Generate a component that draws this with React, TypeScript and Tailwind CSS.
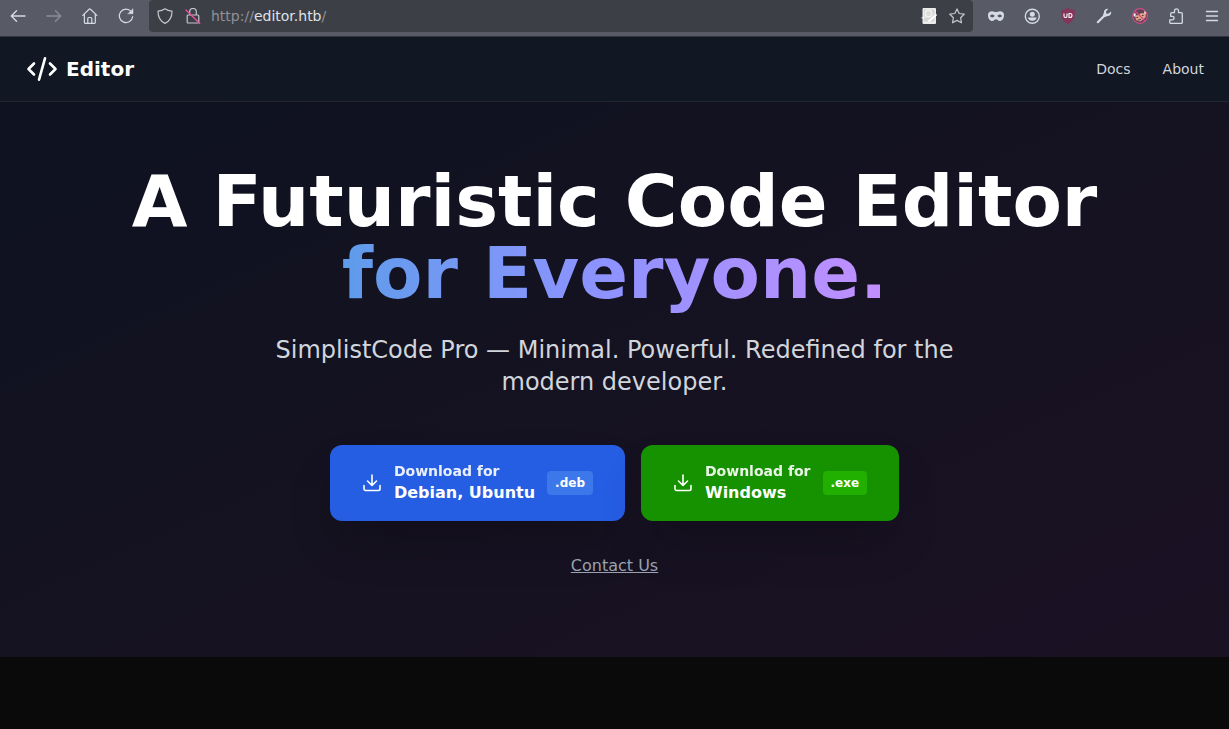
import React from "react";

const toolButton =
  "flex size-5 shrink-0 items-center justify-center text-[#d6dae6]";

type IconProps = { children: React.ReactNode; className?: string };

function Glyph({ children, className = "size-4" }: IconProps) {
  return (
    <svg
      viewBox="0 0 16 16"
      className={className}
      fill="none"
      stroke="currentColor"
      strokeWidth="1.2"
      strokeLinecap="round"
      strokeLinejoin="round"
      aria-hidden="true"
    >
      {children}
    </svg>
  );
}

function BrowserBar() {
  return (
    <div className="flex h-[37px] items-start border-b border-[#33343f] bg-[#585a65]">
      <div className="flex h-8 w-[149px] shrink-0 items-center gap-4 pl-2">
        <button type="button" aria-label="Back" className={toolButton}>
          <Glyph>
            <path d="M15 8H1.5M6.5 2.8L1.3 8l5.2 5.2" strokeWidth="1.4" />
          </Glyph>
        </button>
        <button
          type="button"
          aria-label="Forward"
          className="flex size-5 shrink-0 items-center justify-center text-[#8b8d97]"
        >
          <Glyph>
            <path d="M1 8h13.5M9.5 2.8L14.7 8l-5.2 5.2" strokeWidth="1.4" />
          </Glyph>
        </button>
        <button type="button" aria-label="Home" className={toolButton}>
          <Glyph>
            <path d="M.8 7.400L7.100 1.300a1 1 0 0 1 1.400 0L14.800 7.400M2.400 6.200v8a1.200 1.200 0 0 0 1.200 1.200h8.500a1.200 1.200 0 0 0 1.200-1.200v-8M5.800 15.200V10.500a1 1 0 0 1 1-1h2a1 1 0 0 1 1 1v4.700" />
          </Glyph>
        </button>
        <button type="button" aria-label="Reload" className={toolButton}>
          <Glyph>
            <path d="M13.300 3.700A6.700 6.700 0 1 0 14.700 8.500" />
            <path
              d="M15 1v4.800h-5z"
              fill="currentColor"
              strokeWidth="0.5"
            />
          </Glyph>
        </button>
      </div>

      <div className="flex h-8 min-w-0 flex-1 items-center rounded bg-[#3d3f46] px-2 text-[#c3c6d0]">
        <button
          type="button"
          aria-label="Tracking protection"
          className="flex size-4 shrink-0 items-center justify-center"
        >
          <Glyph>
            <path d="M8 .8c2 1.500 4.300 2.200 7 2.400 0 5.500-1.800 9.800-7 12.200C2.800 13 1 8.700 1 3.200 3.700 3 6 2.300 8 .8z" />
          </Glyph>
        </button>
        <button
          type="button"
          aria-label="Connection not secure"
          className="ml-3 flex size-4 shrink-0 items-center justify-center"
        >
          <Glyph>
            <path d="M4.700 7V3.800a3.300 3.300 0 0 1 6.600 0V7M3.200 7h9.600a1 1 0 0 1 1 1v6a1 1 0 0 1-1 1H3.200a1 1 0 0 1-1-1V8a1 1 0 0 1 1-1z" />
            <path d="M1 2l13.700 13.500" stroke="#f0509f" strokeWidth="1.3" />
          </Glyph>
        </button>
        <a
          href="http://editor.htb/"
          className="ml-[10px] min-w-0 flex-1 truncate text-sm text-[#8f9199]"
        >
          http://<span className="text-[#dfe1e8]">editor.htb</span>/
        </a>
        <button
          type="button"
          aria-label="Page info"
          className="flex size-4 shrink-0 items-center justify-center"
        >
          <svg viewBox="0 0 16 16" className="size-4" aria-hidden="true">
            <rect x="1.500" width="13.500" height="16" rx="1" fill="#ececea" />
            <rect x="3" y="1.500" width="10.500" height="12" fill="#d6d7d6" />
            <circle
              cx="7.500"
              cy="5.500"
              r="3.300"
              fill="#dcdcda"
              stroke="#f4f4f2"
              strokeWidth="1.2"
            />
            <path d="M.5 10l4-1" stroke="#f4f4f2" strokeWidth="1.2" />
            <path d="M7.500 13.500L15.500 6.500" stroke="#fff" strokeWidth="1.8" />
          </svg>
        </button>
        <button
          type="button"
          aria-label="Bookmark this page"
          className="ml-3 flex size-4 shrink-0 items-center justify-center"
        >
          <Glyph>
            <path d="M8 .9l2.200 4.600 5 .7-3.600 3.500.9 5.100L8 12.400l-4.500 2.400.9-5.100L.8 6.200l5-.7z" />
          </Glyph>
        </button>
      </div>

      <div className="flex h-8 shrink-0 items-center gap-4 pr-[7px] pl-[13px]">
        <button type="button" aria-label="Private mask" className={toolButton}>
          <Glyph>
            <path
              d="M0 7C0 4.400 1.600 3.200 4 3.200c1.800 0 2.800.9 4 .9s2.200-.9 4-.9c2.400 0 4 1.200 4 3.800 0 3.600-1.800 6-4.200 6-1.800 0-2.600-1.700-3.800-1.700S6 13 4.200 13C1.800 13 0 10.600 0 7zM2 8.100c.9 1.800 3.500 1.900 4.600 0-1-2-3.600-2-4.600 0zM14 8.100c-.9 1.800-3.500 1.900-4.600 0 1-2 3.600-2 4.600 0z"
              fill="currentColor"
              fillRule="evenodd"
              stroke="none"
            />
          </Glyph>
        </button>
        <button type="button" aria-label="Account" className={toolButton}>
          <Glyph>
            <circle cx="8.300" cy="8.300" r="7" strokeWidth="1.400" />
            <circle cx="8.300" cy="6.200" r="2.500" fill="currentColor" stroke="none" />
            <path
              d="M4 9.500h8.600c0 1.900-1.800 3.200-4.300 3.200S4 11.400 4 9.500z"
              fill="currentColor"
              stroke="none"
            />
          </Glyph>
        </button>
        <button type="button" aria-label="Content blocker" className={toolButton}>
          <svg viewBox="0 0 16 16" className="size-4" aria-hidden="true">
            <path
              d="M8 0c2 1.300 4.500 2 7 2 0 6.500-.8 11-7 14C1.800 13 1 8.500 1 2c2.500 0 5-.7 7-2z"
              fill="#84355a"
            />
            <path
              d="M4 5.500v2.500a1.500 1.500 0 0 0 3 0V5.500M9 5.500v4h1a2 2 0 0 0 0-4z"
              fill="none"
              stroke="#fff"
              strokeWidth="1.1"
            />
          </svg>
        </button>
        <button type="button" aria-label="Developer tools" className={toolButton}>
          <Glyph>
            <path d="M1.800 14.200l7-7" strokeWidth="2.2" />
            <path
              d="M15 3.500l-2.600 2.300-2.200-.2-.2-2.200L12.300.8C9.800.2 7.600 2.200 7.900 4.900L6.800 7l2.200 2.200 2-1.100c2.800.3 4.800-2 4-4.600z"
              fill="currentColor"
              stroke="none"
            />
          </Glyph>
        </button>
        <button type="button" aria-label="Cookie extension" className={toolButton}>
          <svg viewBox="0 0 16 16" className="size-4" aria-hidden="true">
            <circle cx="8" cy="8" r="7" fill="#5f4454" />
            <path d="M1.200 5l2.500.500L3.500 9l-2-1zM12.500 2.500l2 1.500-1 2.500-1.500-1z" fill="#f4eee8" />
            <path
              d="M3 7.500L7 7l2-2 4 .500 1 3-2.500 3L8 13.500l-4-1.500z"
              fill="#e0a184"
            />
            <path d="M4.500 9.500h1.500M10 7.500h1.500M6 12l3-.500" stroke="#5b3340" />
            <circle
              cx="8"
              cy="8"
              r="7.300"
              fill="none"
              stroke="#cf4a8b"
              strokeWidth="1.2"
            />
            <path d="M3 3l10 10" stroke="#cf4a8b" strokeWidth="1.2" />
          </svg>
        </button>
        <button type="button" aria-label="Extensions" className={toolButton}>
          <Glyph>
            <path
              d="M2.700 15.400h10.600a1 1 0 0 0 1-1V5.700a1 1 0 0 0-1-1h-2.800V2.800a2 2 0 0 0-4 0v1.900H3.700a1 1 0 0 0-1 1v2.600h1.700a1.700 1.700 0 0 1 0 3.500H1.800v2.700a.9.9 0 0 0 .9.900z"
              strokeWidth="1.300"
            />
          </Glyph>
        </button>
        <button type="button" aria-label="Menu" className={toolButton}>
          <Glyph>
            <path d="M2.500 3.500h11M2.500 8h11M2.500 12.500h11" strokeWidth="1.4" />
          </Glyph>
        </button>
      </div>
    </div>
  );
}

function SiteHeader() {
  return (
    <header className="flex h-[65px] items-center justify-between border-b border-[#1f2533] bg-[#111723] pr-[25px] pl-6">
      <a href="#home" className="flex items-center gap-2 text-white">
        <svg
          viewBox="0 0 34 28"
          className="h-7 w-[34px]"
          fill="none"
          stroke="currentColor"
          strokeWidth="2.6"
          strokeLinecap="round"
          strokeLinejoin="round"
          aria-hidden="true"
        >
          <path d="M10 8.500L4.500 14l5.500 5.500M26 8.500l5.500 5.500-5.500 5.500M21 3.300l-6 21.400" />
        </svg>
        <span className="text-xl leading-7 font-bold">Editor</span>
      </a>
      <nav className="flex gap-8 text-sm text-[#d1d5dc]">
        <a href="#docs">Docs</a>
        <a href="#about">About</a>
      </nav>
    </header>
  );
}

function DownloadIcon() {
  return (
    <svg
      viewBox="0 0 20 20"
      className="size-5 shrink-0"
      fill="none"
      stroke="currentColor"
      strokeWidth="1.6"
      strokeLinecap="round"
      strokeLinejoin="round"
      aria-hidden="true"
    >
      <path d="M2 12.500v3.300A1.700 1.700 0 0 0 3.700 17.500h12.600a1.700 1.700 0 0 0 1.700-1.700v-3.300M10 2v10M5.500 8l4.500 4.500L14.500 8" />
    </svg>
  );
}

type DownloadProps = {
  system: string;
  extension: string;
  color: string;
  badge: string;
};

function DownloadLink({ system, extension, color, badge }: DownloadProps) {
  return (
    <a
      href="#download"
      className={`flex items-center gap-3 rounded-xl px-8 py-4 font-semibold text-white shadow-2xl ${color}`}
    >
      <DownloadIcon />
      <span className="flex flex-col text-left">
        <span className="text-sm opacity-90">Download for</span>
        <span className="text-base">{system}</span>
      </span>
      <span className={`rounded px-2 py-1 text-xs ${badge}`}>{extension}</span>
    </a>
  );
}

export default function App() {
  return (
    <div className="flex min-h-screen flex-col bg-[#0a0a0a] font-['DejaVu_Sans',sans-serif]">
      <BrowserBar />
      <SiteHeader />
      <main className="flex flex-col items-center bg-linear-to-br from-[#0e1221] via-[#151221] to-[#1a1123] px-6 pt-[63px] pb-[79px] text-center">
        <h1 className="mb-[25px] text-7xl leading-none font-bold text-white">
          A Futuristic Code Editor
          <br />
          <span className="bg-linear-to-r from-[#5e9ceb] via-[#8f92ff] to-[#c28fff] bg-clip-text text-transparent">
            for Everyone.
          </span>
        </h1>
        <p className="mb-[47px] max-w-3xl text-2xl text-[#d1d5dc]">
          SimplistCode Pro — Minimal. Powerful. Redefined for the modern
          developer.
        </p>
        <div className="flex flex-wrap justify-center gap-4">
          <DownloadLink
            system="Debian, Ubuntu"
            extension=".deb"
            color="bg-[#255de3]"
            badge="bg-[#3c78ea]"
          />
          <DownloadLink
            system="Windows"
            extension=".exe"
            color="bg-[#169200]"
            badge="bg-[#22b000]"
          />
        </div>
        <a
          href="#contact"
          className="mt-[33px] text-base text-[#99a1af] underline"
        >
          Contact Us
        </a>
      </main>
    </div>
  );
}
